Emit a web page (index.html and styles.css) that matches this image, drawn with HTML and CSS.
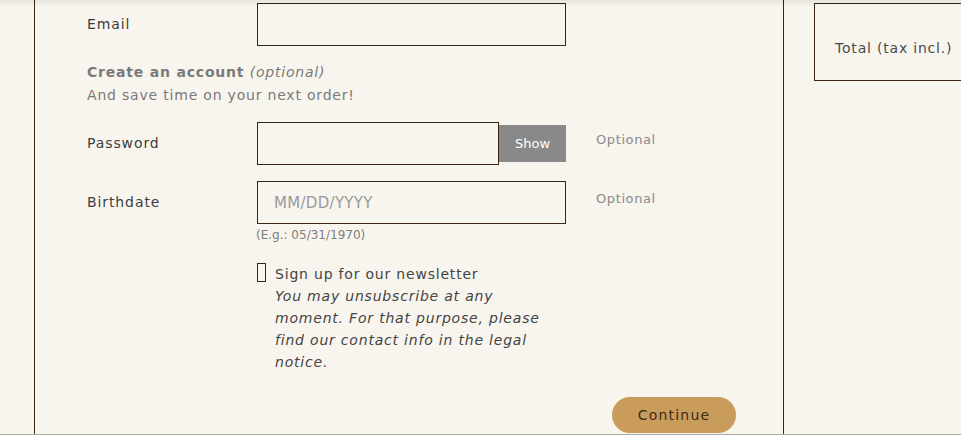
FILE: index.html
```html
<!DOCTYPE html>
<html>
<head>
    <title>Checkout - Personal Information</title>
    <link rel="stylesheet" href="styles.css">
</head>
<body>
    <div class="topShadow"></div>
    <div class="page">
        <div class="main">
            <form class="customerForm">
                <div class="formRow">
                    <label class="formLabel" for="email">Email</label>
                    <div class="formField">
                        <input type="text" id="email" class="formInput" />
                    </div>
                </div>

                <div class="accountNote">
                    <p><span class="accountTitle">Create an account</span> <em>(optional)</em></p>
                    <p>And save time on your next order!</p>
                </div>

                <div class="formRow passwordRow">
                    <label class="formLabel" for="password">Password</label>
                    <div class="formField passwordField">
                        <input type="password" id="password" class="formInput" />
                        <button type="button" class="showButton">Show</button>
                    </div>
                    <span class="formComment">Optional</span>
                </div>

                <div class="formRow birthRow">
                    <label class="formLabel" for="birthday">Birthdate</label>
                    <div class="formField">
                        <input type="text" id="birthday" class="formInput" placeholder="MM/DD/YYYY" />
                    </div>
                    <span class="formComment">Optional</span>
                </div>
                <div class="formHint">(E.g.: 05/31/1970)</div>

                <div class="newsletter">
                    <span class="checkBox"></span>
                    <div class="newsletterText">
                        <span>Sign up for our newsletter</span>
                        <em>You may unsubscribe at any moment. For that purpose, please find our contact info in the legal notice.</em>
                    </div>
                </div>

                <div class="formFooter">
                    <button type="button" class="continueButton">Continue</button>
                </div>
            </form>
        </div>

        <div class="aside">
            <div class="cartSummary">
                <span>Total (tax incl.)</span>
            </div>
        </div>
    </div>
</body>
</html>
```

FILE: styles.css
```css
body {
    font-family: "DejaVu Sans", sans-serif;
    background-color: #f8f5ee;
    color: #3d3d3d;
    margin: 0;
    height: 435px;
    overflow: hidden;
}

.topShadow {
    position: absolute;
    top: 0;
    left: 0;
    right: 0;
    height: 6px;
    background: linear-gradient(to bottom, rgba(0, 0, 0, 0.07), rgba(0, 0, 0, 0));
}

.page {
    display: flex;
    padding-left: 34px;
    height: 434px;
    border-bottom: 1px solid #a9a9a6;
}

.main {
    width: 750px;
    box-sizing: border-box;
    border-left: 1px solid #3b2510;
    border-right: 1px solid #3b2510;
    padding: 3px 47px 0 52px;
}

.aside {
    flex: 1;
    margin-left: 30px;
    padding-top: 3px;
}

.cartSummary {
    height: 78px;
    box-sizing: border-box;
    border: 1px solid #3b2510;
    border-right: none;
    padding: 36px 0 0 20px;
    font-size: 14px;
    letter-spacing: 0.8px;
    color: #4a4a4a;
    white-space: nowrap;
}

.formRow {
    display: flex;
    align-items: center;
}

.formLabel {
    width: 170px;
    font-size: 14px;
    letter-spacing: 0.9px;
    color: #3d3d3d;
    margin-top: -1px;
}

.formField {
    display: flex;
    align-items: center;
    width: 309px;
}

.formInput {
    width: 100%;
    height: 43px;
    box-sizing: border-box;
    border: 1px solid #3b2510;
    background-color: transparent;
    padding: 0 16px;
    font-family: inherit;
    font-size: 15px;
    letter-spacing: 0.3px;
    margin: 0;
}

.formInput::placeholder {
    color: #9a9a9a;
}

.passwordField .formInput {
    width: 242px;
}

.showButton {
    width: 67px;
    height: 37px;
    border: none;
    background-color: #898989;
    color: #fff;
    font-family: inherit;
    font-size: 13px;
    padding: 0;
}

.formComment {
    align-self: flex-start;
    margin: 10px 0 0 30px;
    font-size: 13px;
    letter-spacing: 0.6px;
    color: #8a8a8a;
}

.accountNote {
    margin-top: 15px;
    font-size: 14px;
    line-height: 23px;
    letter-spacing: 0.8px;
    color: #7a7a7a;
}

.accountNote p {
    margin: 0;
}

.accountTitle {
    font-weight: bold;
}

.passwordRow {
    margin-top: 15px;
}

.birthRow {
    margin-top: 16px;
}

.formHint {
    margin: 2px 0 0 169px;
    font-size: 12px;
    line-height: 18px;
    color: #7d7d7d;
}

.newsletter {
    display: flex;
    margin: 19px 0 0 170px;
}

.checkBox {
    width: 7px;
    height: 17px;
    border: 1px solid #3b2510;
    margin-right: 9px;
    flex-shrink: 0;
}

.newsletterText {
    width: 272px;
    font-size: 14px;
    line-height: 22px;
    letter-spacing: 0.8px;
    color: #444;
}

.newsletterText span,
.newsletterText em {
    display: block;
}

.formFooter {
    display: flex;
    justify-content: flex-end;
    margin-top: 24px;
}

.continueButton {
    width: 124px;
    height: 36px;
    border: none;
    border-radius: 18px;
    background-color: #c99c5b;
    color: #3f2a14;
    font-family: inherit;
    font-size: 14px;
    letter-spacing: 1.2px;
}
```
